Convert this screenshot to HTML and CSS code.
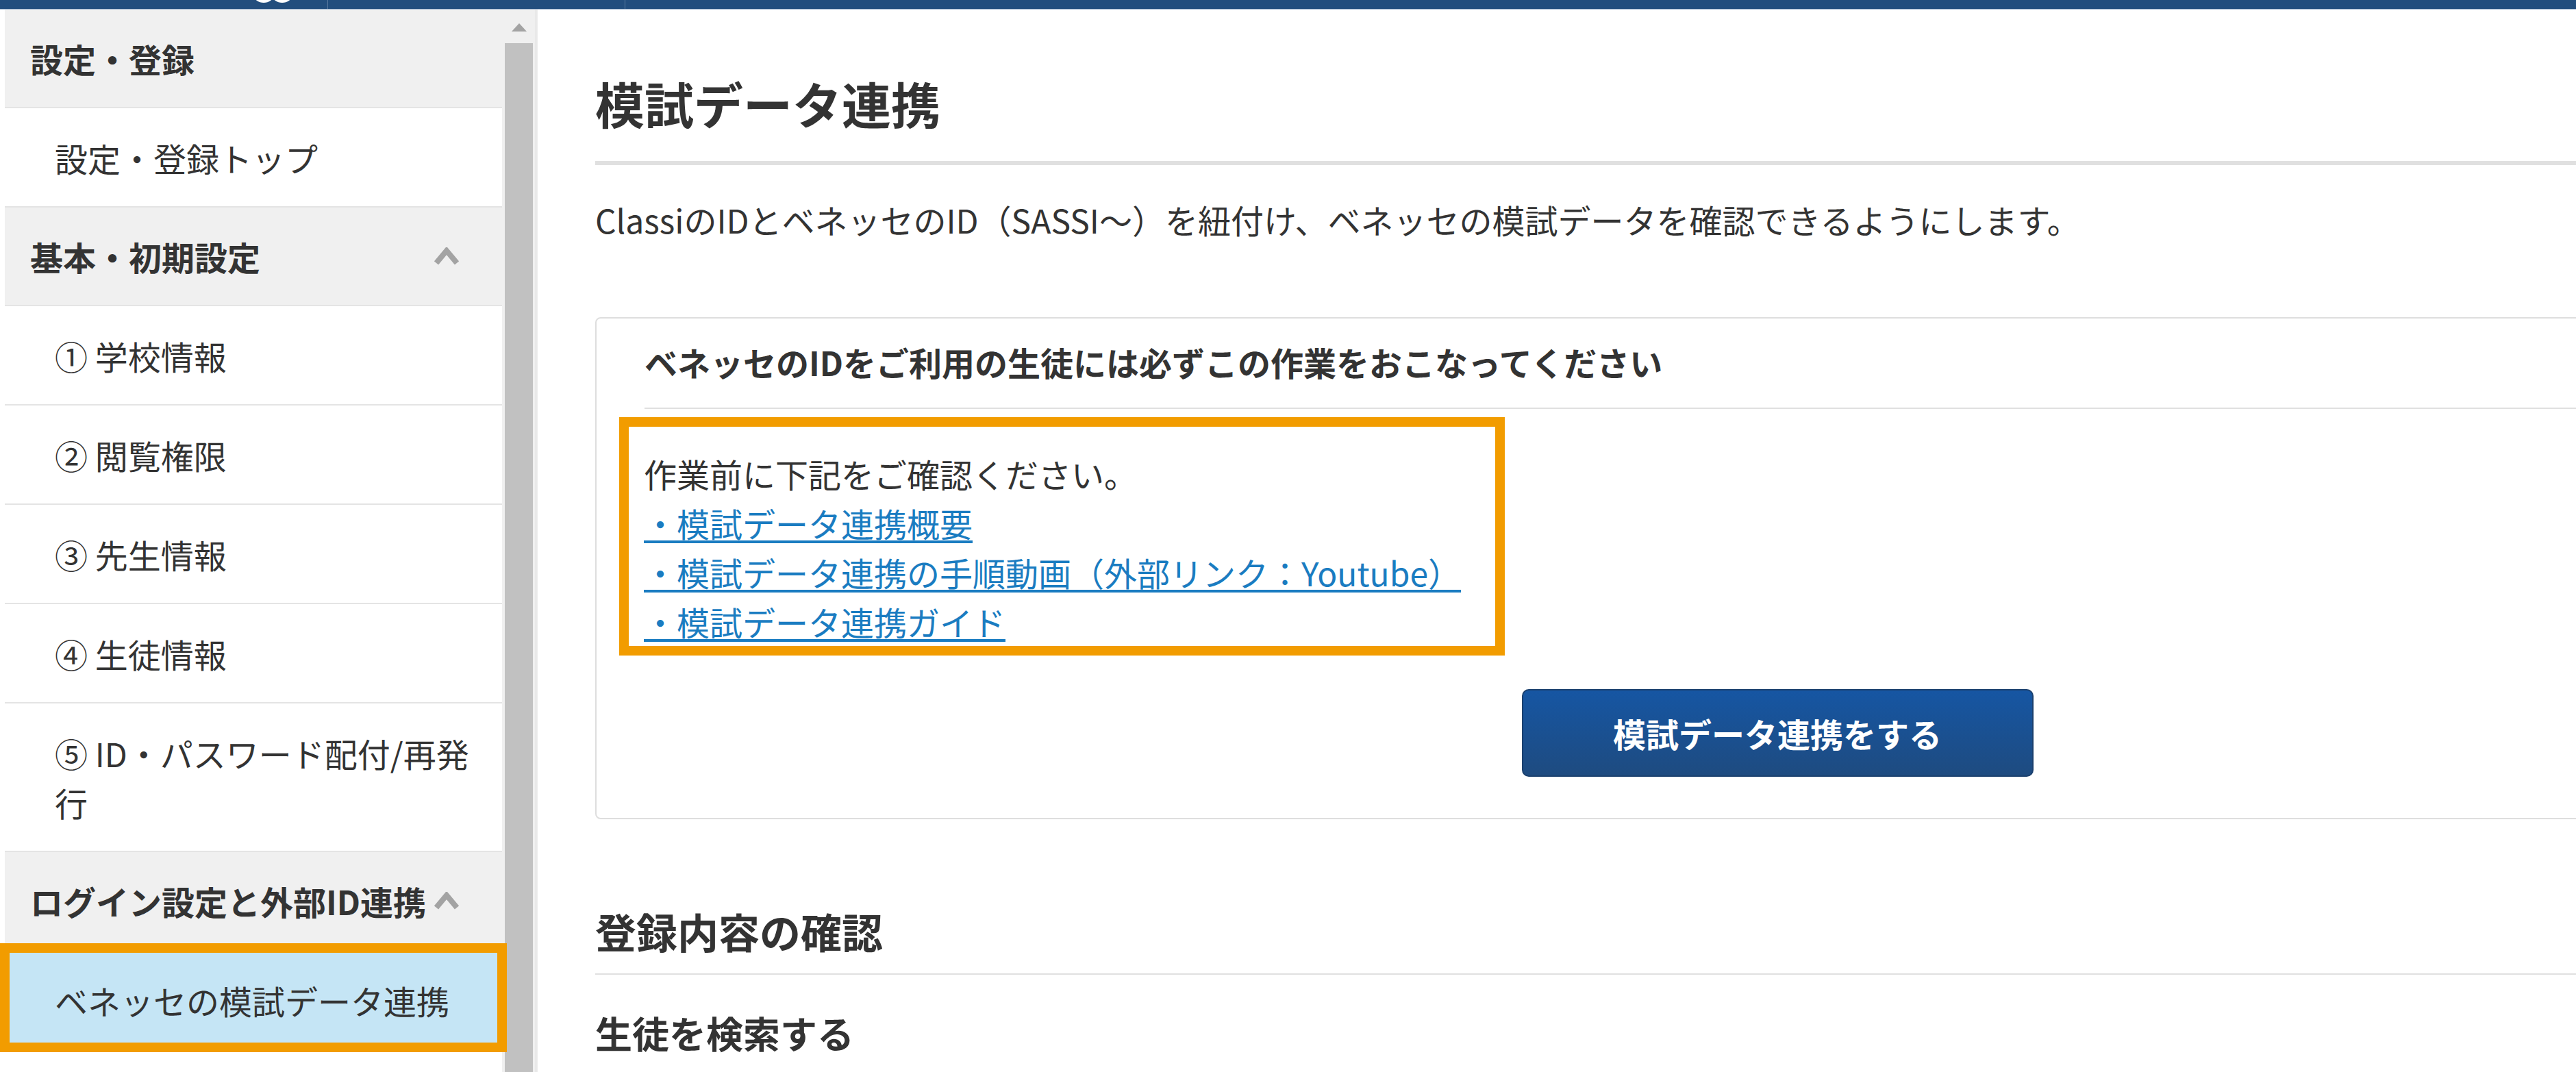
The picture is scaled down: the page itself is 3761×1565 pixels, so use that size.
FILE: index.html
```html
<!DOCTYPE html>
<html lang="ja">
<head>
    <meta charset="UTF-8">
    <title>模試データ連携</title>
    <link rel="stylesheet" href="styles.css">
</head>
<body>

<div id="topbar">
    <svg class="logo" width="60" height="13" viewBox="0 0 60 13">
        <ellipse cx="15" cy="-6" rx="14" ry="10" fill="#fff"/>
        <ellipse cx="42" cy="-6" rx="14" ry="10" fill="#fff"/>
    </svg>
    <span class="sep sep-1"></span>
    <span class="sep sep-2"></span>
</div>

<div id="layout">
    <div id="sidebar">
        <ul class="nav">
            <li class="nav-head">設定・登録</li>
            <li class="nav-item">設定・登録トップ</li>
            <li class="nav-head">基本・初期設定
                <svg class="chevron" width="36" height="26" viewBox="0 0 36 26"><polyline points="3,23 18,5 33,23" fill="none" stroke="#a3a3a3" stroke-width="8"/></svg>
            </li>
            <li class="nav-item">① 学校情報</li>
            <li class="nav-item">② 閲覧権限</li>
            <li class="nav-item">③ 先生情報</li>
            <li class="nav-item">④ 生徒情報</li>
            <li class="nav-item">⑤ ID・パスワード配付/再発行</li>
            <li class="nav-head">ログイン設定と外部ID連携
                <svg class="chevron" width="36" height="26" viewBox="0 0 36 26"><polyline points="3,23 18,5 33,23" fill="none" stroke="#a3a3a3" stroke-width="8"/></svg>
            </li>
            <li class="nav-item active">ベネッセの模試データ連携</li>
        </ul>
        <div class="scrollbar">
            <span class="arrow"></span>
            <span class="thumb"></span>
        </div>
    </div>

    <div id="main">
        <h1 class="page-title">模試データ連携</h1>
        <p class="lead">ClassiのIDとベネッセのID（SASSI～）を紐付け、ベネッセの模試データを確認できるようにします。</p>

        <div class="card">
            <h2 class="card-title">ベネッセのIDをご利用の生徒には必ずこの作業をおこなってください</h2>
            <div class="note">
                <p>作業前に下記をご確認ください。</p>
                <a href="#">・模試データ連携概要</a>
                <a href="#">・模試データ連携の手順動画（外部リンク：Youtube）</a>
                <a href="#">・模試データ連携ガイド</a>
            </div>
            <div class="btn-row">
                <button class="btn">模試データ連携をする</button>
            </div>
        </div>

        <h2 class="section-title">登録内容の確認</h2>
        <h3 class="sub-title">生徒を検索する</h3>
    </div>
</div>

</body>
</html>
```

FILE: styles.css
```css
*{
    margin: 0;
    padding: 0;
    box-sizing: border-box;
}
ul, ol{
    list-style: none;
}
a{
    text-decoration: none;
}

body{
    width: 3761px;
    height: 1565px;
    overflow: hidden;
    background: #fff;
    color: #333;
    font-family: "Noto Sans CJK JP", "Noto Sans", sans-serif;
}

/* header strip (cut off at the top) */
#topbar{
    height: 14px;
    background: #224e7e;
    border-bottom: 1px solid #a9bcd3;
    position: relative;
}
#topbar .logo{
    position: absolute;
    left: 370px;
    top: 0;
}
#topbar .sep{
    position: absolute;
    top: 0;
    width: 1px;
    height: 13px;
    background: #5a7aa0;
}
#topbar .sep-1{ left: 478px; }
#topbar .sep-2{ left: 912px; }

#layout{
    display: flex;
    height: 1551px;
}

/* sidebar */
#sidebar{
    display: flex;
    flex: none;
    padding-left: 7px;
}
.nav{
    width: 726px;
}
.nav li{
    font-size: 48px;
    line-height: 72px;
    border-bottom: 2px solid #e4e4e4;
}
.nav-head{
    display: flex;
    justify-content: space-between;
    align-items: center;
    padding: 35px 63px 35px 37px;
    background: #f0f0f0;
    font-weight: bold;
    color: #333;
}
.nav-item{
    padding: 36px 40px 35px 73px;
    background: #fff;
    color: #333;
}
.nav .active{
    background: #c5e5f5;
    position: relative;
    border-bottom: 0;
}
.nav .active::after{
    content: "";
    position: absolute;
    left: -7px;
    right: -7px;
    top: -11px;
    bottom: -5px;
    border: 14px solid #f29c00;
    z-index: 5;
}

.scrollbar{
    width: 50px;
    background: #f0f0f0;
    border-right: 1px solid #d9d9d9;
    display: flex;
    flex-direction: column;
    align-items: center;
}
.scrollbar .arrow{
    margin-top: 20px;
    width: 0;
    height: 0;
    border-left: 11px solid transparent;
    border-right: 11px solid transparent;
    border-bottom: 12px solid #a3a3a3;
}
.scrollbar .thumb{
    margin-top: 17px;
    width: 41px;
    flex: 1;
    background: #c1c1c1;
}

/* main */
#main{
    flex: 1;
    min-width: 0;
    overflow: hidden;
    padding: 86px 0 0 84px;
    border-left: 2px solid #ececec;
}
.page-title{
    font-size: 72px;
    line-height: 100px;
    font-weight: bold;
    padding-bottom: 35px;
    border-bottom: 6px solid #e0e0e0;
}
.lead{
    margin-top: 43px;
    font-size: 48px;
    line-height: 72px;
}

.card{
    width: 3452px;
    margin-top: 107px;
    border: 2px solid #dedede;
    border-radius: 8px;
    padding: 0 70px 60px;
}
.card-title{
    font-size: 48px;
    line-height: 72px;
    font-weight: bold;
    padding: 27px 0 31px;
    border-bottom: 2px solid #e0e0e0;
}
.note{
    width: fit-content;
    margin: 12px 0 0 -37px;
    padding: 32px 50px 0 22px;
    border: 14px solid #f29c00;
    font-size: 48px;
    line-height: 72px;
}
.note a{
    display: block;
    width: fit-content;
    color: #1a7cc1;
    text-decoration: underline;
    text-underline-offset: 5px;
    text-decoration-thickness: 4px;
}
.btn-row{
    text-align: center;
    padding-top: 49px;
}
.btn{
    width: 747px;
    height: 128px;
    border: 2px solid #1b406e;
    border-radius: 10px;
    background: linear-gradient(#1656a3, #1e4b80);
    color: #fff;
    font-family: inherit;
    font-size: 48px;
    font-weight: bold;
}

.section-title{
    margin-top: 121px;
    font-size: 60px;
    line-height: 84px;
    font-weight: bold;
    padding-bottom: 20px;
    border-bottom: 2px solid #e0e0e0;
}
.sub-title{
    margin-top: 45px;
    font-size: 54px;
    line-height: 80px;
    font-weight: bold;
}
```
